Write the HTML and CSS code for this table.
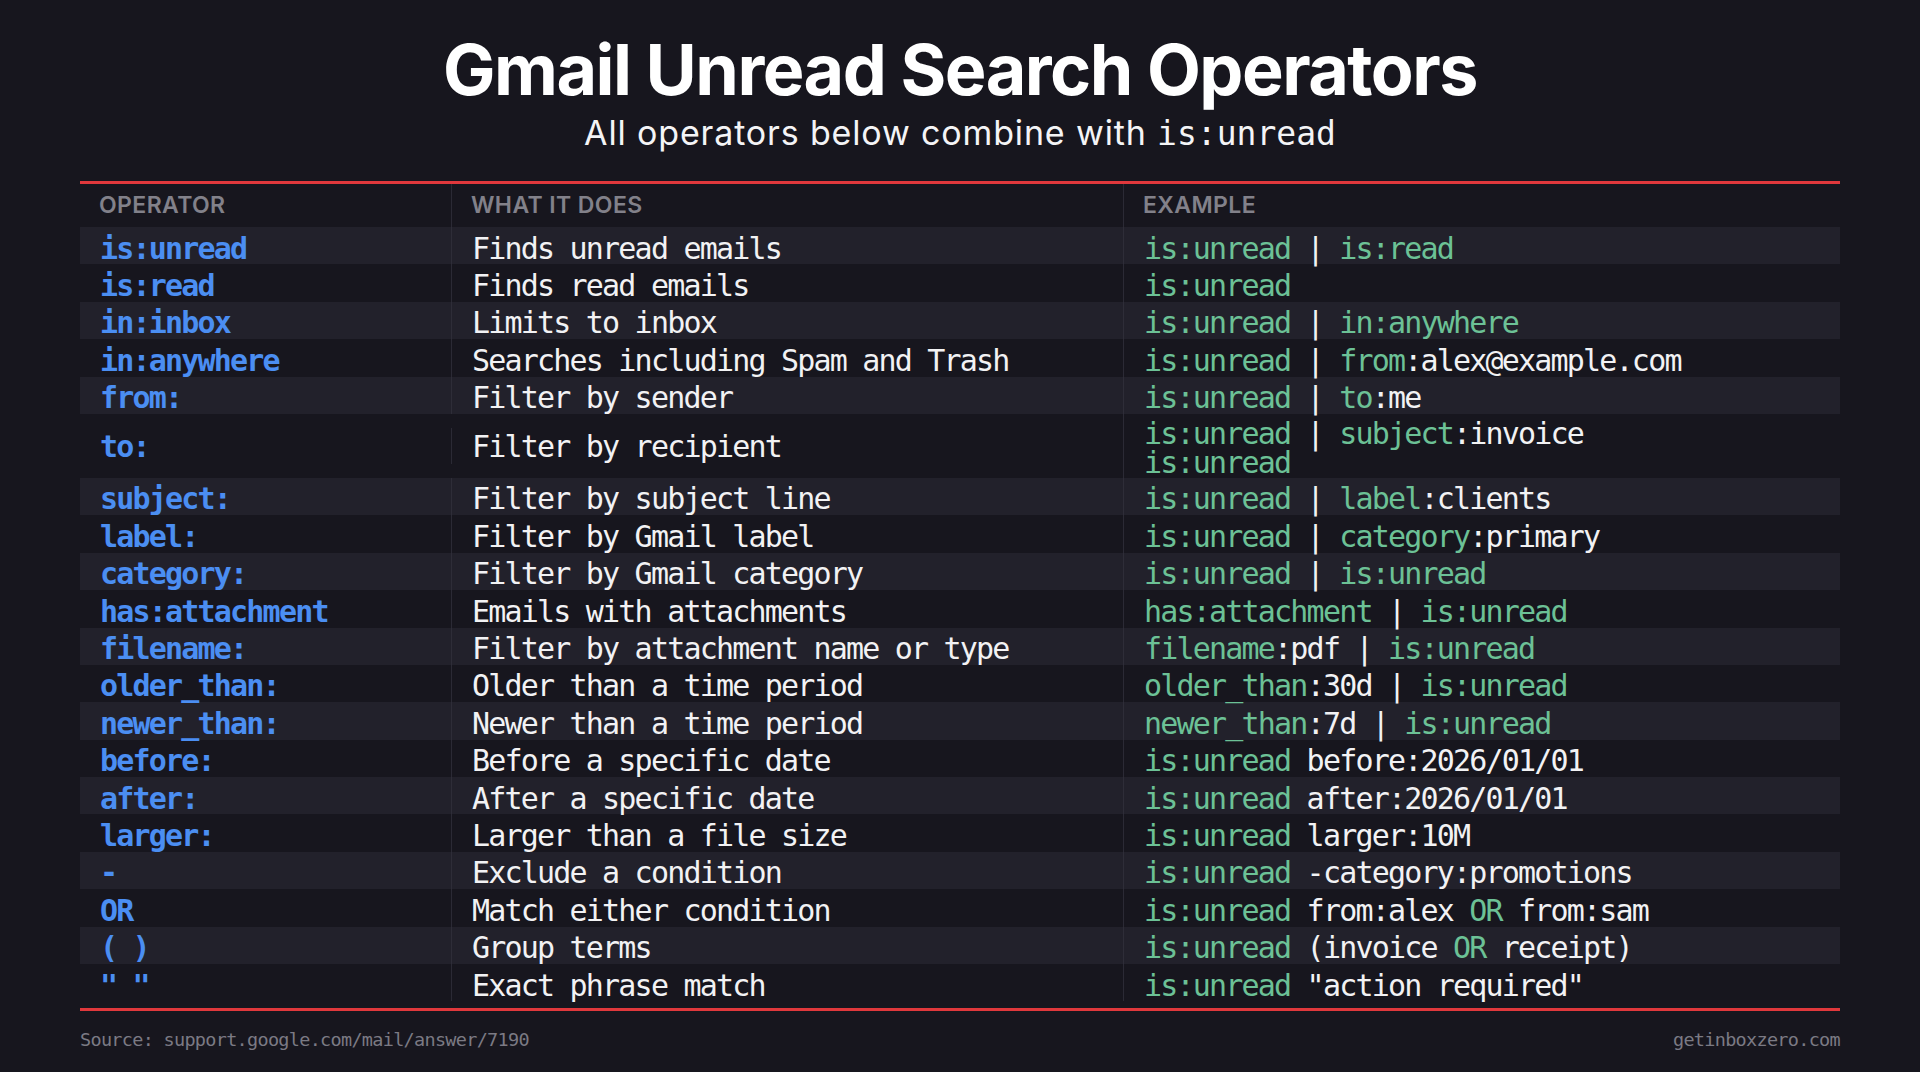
FILE: index.html
```html
<!DOCTYPE html>
<html lang="en">
<head>
<meta charset="utf-8">
<title>Gmail Unread Search Operators</title>
<link rel="stylesheet" href="styles.css">
</head>
<body>
<main class="page">
  <header class="intro">
    <h1 class="title">Gmail Unread Search Operators</h1>
    <p class="subtitle">All operators below combine with <code class="sub-code">is:unread</code></p>
  </header>

  <section class="table">
    <div class="row head">
      <div class="cell">OPERATOR</div>
      <div class="cell">WHAT IT DOES</div>
      <div class="cell">EXAMPLE</div>
    </div>

    <div class="row alt">
      <div class="cell op">is:unread</div>
      <div class="cell desc">Finds unread emails</div>
      <div class="cell ex"><span class="g">is:unread</span> | <span class="g">is:read</span></div>
    </div>
    <div class="row">
      <div class="cell op">is:read</div>
      <div class="cell desc">Finds read emails</div>
      <div class="cell ex"><span class="g">is:unread</span></div>
    </div>
    <div class="row alt">
      <div class="cell op">in:inbox</div>
      <div class="cell desc">Limits to inbox</div>
      <div class="cell ex"><span class="g">is:unread</span> | <span class="g">in:anywhere</span></div>
    </div>
    <div class="row">
      <div class="cell op">in:anywhere</div>
      <div class="cell desc">Searches including Spam and Trash</div>
      <div class="cell ex"><span class="g">is:unread</span> | <span class="g">from</span>:alex@example.com</div>
    </div>
    <div class="row alt">
      <div class="cell op">from:</div>
      <div class="cell desc">Filter by sender</div>
      <div class="cell ex"><span class="g">is:unread</span> | <span class="g">to</span>:me</div>
    </div>
    <div class="row tall">
      <div class="cell op">to:</div>
      <div class="cell desc">Filter by recipient</div>
      <div class="cell ex"><span class="ex-line"><span class="g">is:unread</span> | <span class="g">subject</span>:invoice</span><span class="ex-line"><span class="g">is:unread</span></span></div>
    </div>
    <div class="row alt">
      <div class="cell op">subject:</div>
      <div class="cell desc">Filter by subject line</div>
      <div class="cell ex"><span class="g">is:unread</span> | <span class="g">label</span>:clients</div>
    </div>
    <div class="row">
      <div class="cell op">label:</div>
      <div class="cell desc">Filter by Gmail label</div>
      <div class="cell ex"><span class="g">is:unread</span> | <span class="g">category</span>:primary</div>
    </div>
    <div class="row alt">
      <div class="cell op">category:</div>
      <div class="cell desc">Filter by Gmail category</div>
      <div class="cell ex"><span class="g">is:unread</span> | <span class="g">is:unread</span></div>
    </div>
    <div class="row">
      <div class="cell op">has:attachment</div>
      <div class="cell desc">Emails with attachments</div>
      <div class="cell ex"><span class="g">has:attachment</span> | <span class="g">is:unread</span></div>
    </div>
    <div class="row alt">
      <div class="cell op">filename:</div>
      <div class="cell desc">Filter by attachment name or type</div>
      <div class="cell ex"><span class="g">filename</span>:pdf | <span class="g">is:unread</span></div>
    </div>
    <div class="row">
      <div class="cell op">older_than:</div>
      <div class="cell desc">Older than a time period</div>
      <div class="cell ex"><span class="g">older_than</span>:30d | <span class="g">is:unread</span></div>
    </div>
    <div class="row alt">
      <div class="cell op">newer_than:</div>
      <div class="cell desc">Newer than a time period</div>
      <div class="cell ex"><span class="g">newer_than</span>:7d | <span class="g">is:unread</span></div>
    </div>
    <div class="row">
      <div class="cell op">before:</div>
      <div class="cell desc">Before a specific date</div>
      <div class="cell ex"><span class="g">is:unread</span> before:2026/01/01</div>
    </div>
    <div class="row alt">
      <div class="cell op">after:</div>
      <div class="cell desc">After a specific date</div>
      <div class="cell ex"><span class="g">is:unread</span> after:2026/01/01</div>
    </div>
    <div class="row">
      <div class="cell op">larger:</div>
      <div class="cell desc">Larger than a file size</div>
      <div class="cell ex"><span class="g">is:unread</span> larger:10M</div>
    </div>
    <div class="row alt">
      <div class="cell op">-</div>
      <div class="cell desc">Exclude a condition</div>
      <div class="cell ex"><span class="g">is:unread</span> -category:promotions</div>
    </div>
    <div class="row">
      <div class="cell op">OR</div>
      <div class="cell desc">Match either condition</div>
      <div class="cell ex"><span class="g">is:unread</span> from:alex <span class="g">OR</span> from:sam</div>
    </div>
    <div class="row alt">
      <div class="cell op">( )</div>
      <div class="cell desc">Group terms</div>
      <div class="cell ex"><span class="g">is:unread</span> (invoice <span class="g">OR</span> receipt)</div>
    </div>
    <div class="row">
      <div class="cell op">" "</div>
      <div class="cell desc">Exact phrase match</div>
      <div class="cell ex"><span class="g">is:unread</span> "action required"</div>
    </div>
  </section>

  <footer class="foot">
    <span>Source: support.google.com/mail/answer/7190</span>
    <span>getinboxzero.com</span>
  </footer>
</main>
</body>
</html>
```

FILE: styles.css
```css
* { box-sizing: border-box; }

html, body {
  margin: 0;
  padding: 0;
  background: #17161e;
}

body {
  width: 1920px;
  height: 1072px;
  overflow: hidden;
  color: #f2f2f4;
  font-family: "Inter", "Noto Sans", sans-serif;
}

.page {
  padding: 28px 80px 0;
}

.intro {
  text-align: center;
}

.title {
  margin: 0;
  font-family: "Inter", sans-serif;
  font-weight: 700;
  font-size: 70px;
  line-height: 84px;
  letter-spacing: -1.5px;
  color: #ffffff;
}

.subtitle {
  margin: 1px 0 0;
  height: 40px;
  font-size: 34px;
  line-height: 40px;
  font-weight: 400;
  letter-spacing: 0.85px;
  color: #f4f4f6;
}

.sub-code {
  font-family: "DejaVu Sans Mono", monospace;
  font-size: 33px;
  line-height: 1;
  letter-spacing: 0;
}

.table {
  margin-top: 28px;
  border-top: 3px solid #e0383c;
  border-bottom: 3px solid #e0383c;
  padding-bottom: 7px;
}

.row {
  display: grid;
  grid-template-columns: 371px 672px 1fr;
}

.row.alt {
  background: #22212b;
}

.cell {
  padding: 6.5px 0 1.9px 20px;
  font-family: "DejaVu Sans Mono", monospace;
  font-size: 30px;
  line-height: 29px;
  letter-spacing: -1.8px;
  white-space: nowrap;
}

.cell + .cell {
  border-left: 1px solid #2b2a35;
}

.row.alt .cell + .cell {
  border-left-color: #2e2d38;
}

.head .cell {
  padding: 0 0 0 19px;
  height: 43px;
  line-height: 43px;
  font-family: "Inter", sans-serif;
  font-size: 23px;
  font-weight: 600;
  letter-spacing: 0.4px;
  color: #82818a;
}

.op {
  color: #4b8ef2;
  font-weight: 700;
}

.desc {
  color: #f2f2f4;
}

.ex {
  color: #f2f2f4;
}

.g {
  color: #6cc196;
}

.row.tall {
  align-items: center;
}

.row.tall .op,
.row.tall .desc {
  padding-top: 4px;
  padding-bottom: 3px;
}

.row.tall .ex {
  display: flex;
  flex-direction: column;
  padding-top: 5px;
  padding-bottom: 1px;
  align-self: stretch;
}

.ex-line {
  display: block;
  height: 29px;
  line-height: 29px;
}

.foot {
  display: flex;
  justify-content: space-between;
  padding-top: 17px;
  font-family: "DejaVu Sans Mono", monospace;
  font-size: 18.5px;
  line-height: 24px;
  letter-spacing: -0.7px;
  color: #7b7a84;
}
```
